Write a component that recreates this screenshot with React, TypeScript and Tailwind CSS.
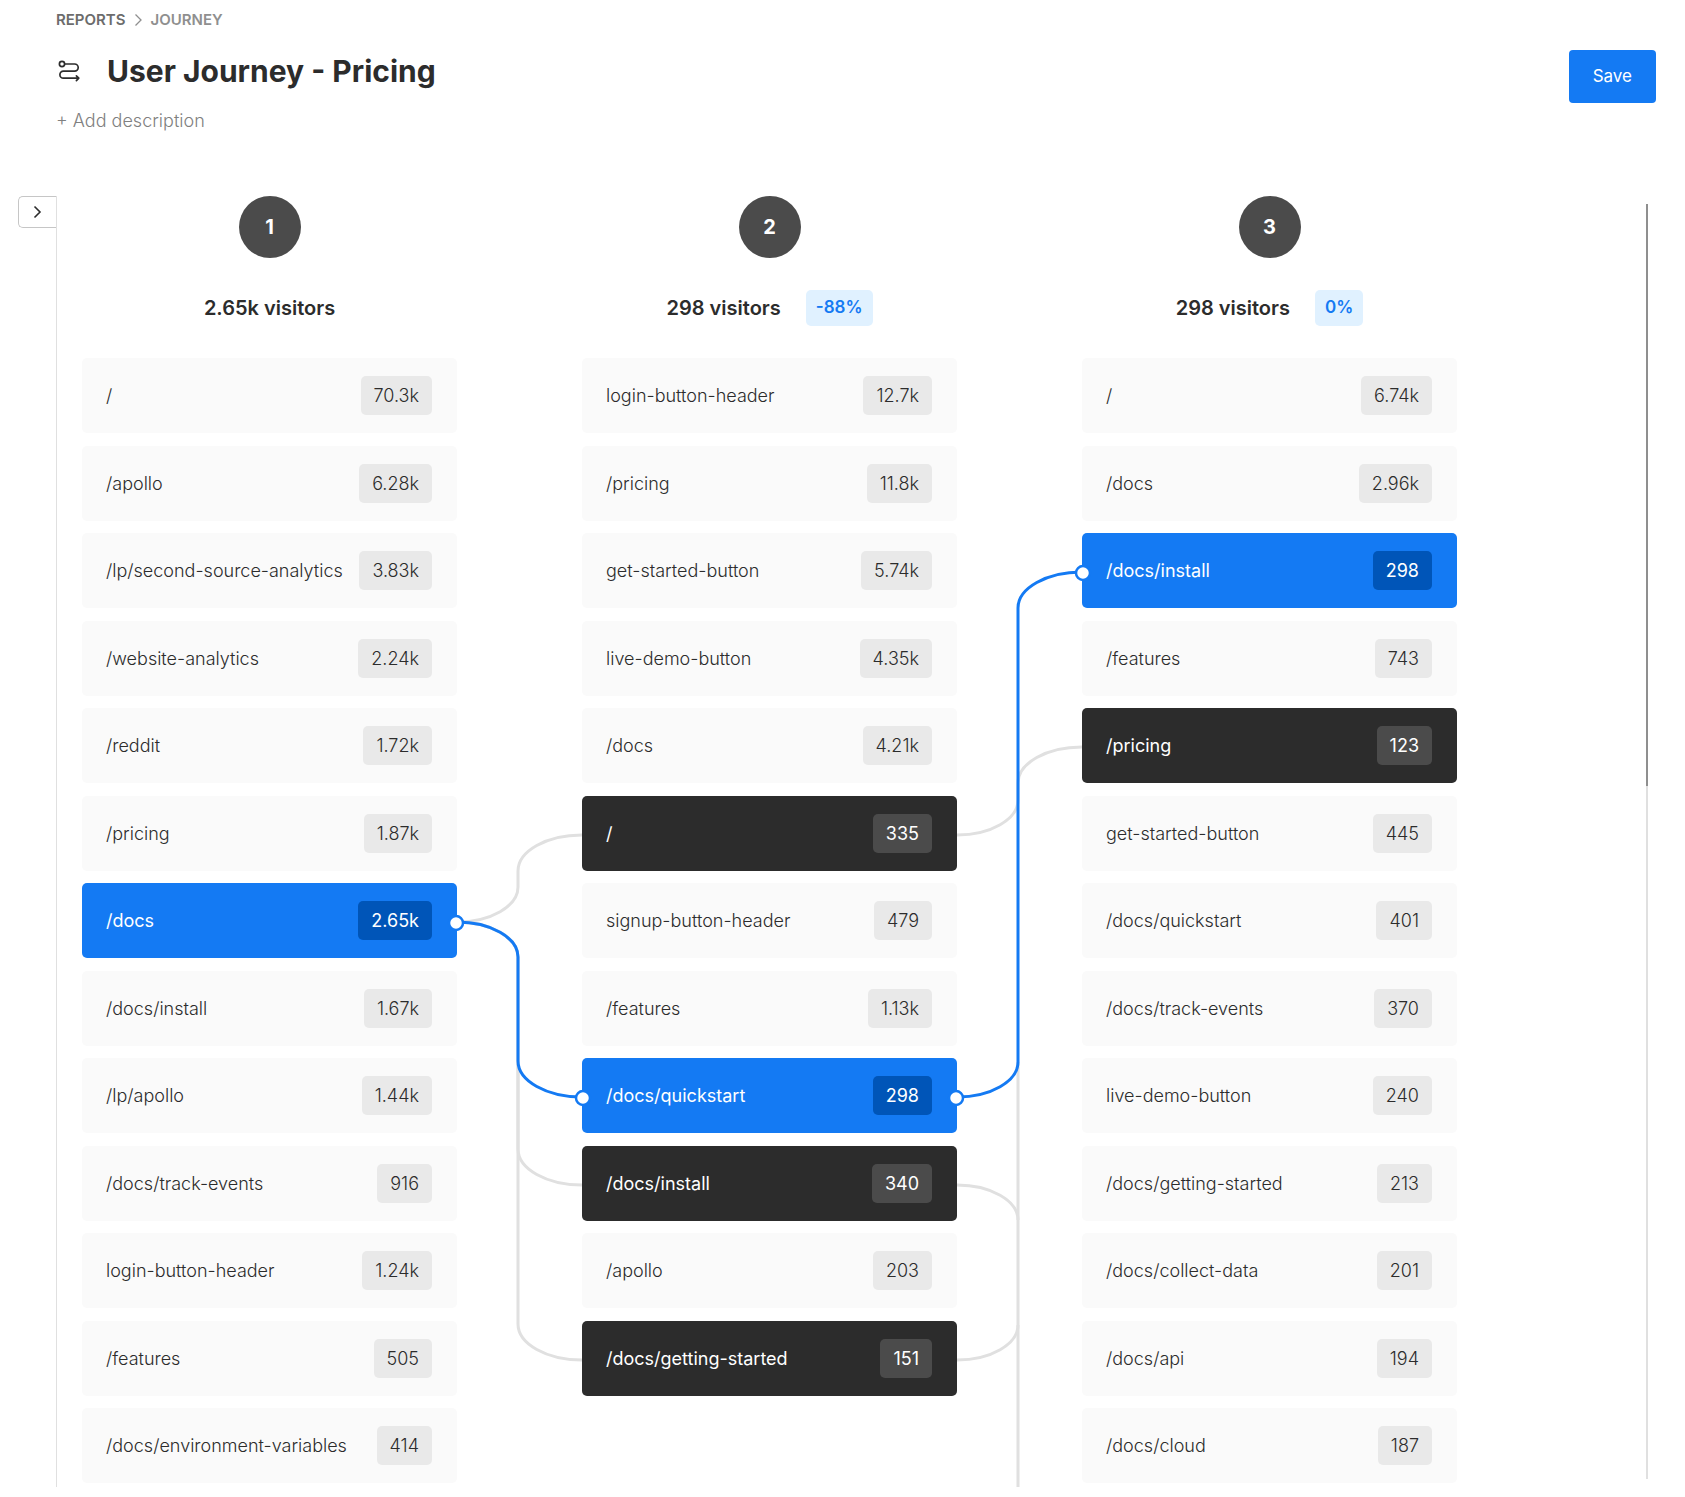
type Tone = 'plain' | 'active' | 'linked';
type Row = [label: string, count: string, tone?: Tone];
type Step = { visitors: string; change?: string; rows: Row[] };
type Link = { from: number; to: number; active?: boolean };

const steps: Step[] = [
  {
    visitors: '2.65k visitors',
    rows: [
      ['/', '70.3k'],
      ['/apollo', '6.28k'],
      ['/lp/second-source-analytics', '3.83k'],
      ['/website-analytics', '2.24k'],
      ['/reddit', '1.72k'],
      ['/pricing', '1.87k'],
      ['/docs', '2.65k', 'active'],
      ['/docs/install', '1.67k'],
      ['/lp/apollo', '1.44k'],
      ['/docs/track-events', '916'],
      ['login-button-header', '1.24k'],
      ['/features', '505'],
      ['/docs/environment-variables', '414'],
    ],
  },
  {
    visitors: '298 visitors',
    change: '-88%',
    rows: [
      ['login-button-header', '12.7k'],
      ['/pricing', '11.8k'],
      ['get-started-button', '5.74k'],
      ['live-demo-button', '4.35k'],
      ['/docs', '4.21k'],
      ['/', '335', 'linked'],
      ['signup-button-header', '479'],
      ['/features', '1.13k'],
      ['/docs/quickstart', '298', 'active'],
      ['/docs/install', '340', 'linked'],
      ['/apollo', '203'],
      ['/docs/getting-started', '151', 'linked'],
    ],
  },
  {
    visitors: '298 visitors',
    change: '0%',
    rows: [
      ['/', '6.74k'],
      ['/docs', '2.96k'],
      ['/docs/install', '298', 'active'],
      ['/features', '743'],
      ['/pricing', '123', 'linked'],
      ['get-started-button', '445'],
      ['/docs/quickstart', '401'],
      ['/docs/track-events', '370'],
      ['live-demo-button', '240'],
      ['/docs/getting-started', '213'],
      ['/docs/collect-data', '201'],
      ['/docs/api', '194'],
      ['/docs/cloud', '187'],
    ],
  },
];

const BOARD_HEIGHT = 1129;
const MID = 61;
const anchor = (row: number) => Math.round(row * 87.5) + 39;

function linkPath({ from, to }: Link) {
  const y1 = anchor(from);
  const y2 = anchor(to);
  return y2 > y1
    ? `M0 ${y1} A${MID} 35 0 0 1 ${MID} ${y1 + 35} V${y2 - 36} A64 36 0 0 0 125 ${y2}`
    : `M0 ${y1} A${MID} 35 0 0 0 ${MID} ${y1 - 35} V${y2 + 36} A64 36 0 0 1 125 ${y2}`;
}

const firstLinks: Link[] = [
  { from: 6, to: 5 },
  { from: 6, to: 9 },
  { from: 6, to: 11 },
  { from: 6, to: 8, active: true },
];

const secondLinks: Link[] = [
  { from: 5, to: 4 },
  { from: 8, to: 2, active: true },
];

// Links of the second step that leave the visible rows: a shared trunk with two branches.
const secondTrunk = [
  `M${MID} ${anchor(8) - 35} V${BOARD_HEIGHT}`,
  `M0 ${anchor(9)} A${MID} 35 0 0 1 ${MID} ${anchor(9) + 35}`,
  `M0 ${anchor(11)} A${MID} 35 0 0 0 ${MID} ${anchor(11) - 35}`,
];

function Connectors({ items, trunk = [] }: { items: Link[]; trunk?: string[] }) {
  return (
    <svg
      width="125"
      height={BOARD_HEIGHT}
      viewBox={`0 0 125 ${BOARD_HEIGHT}`}
      className="relative z-10 mt-[162px] shrink-0 overflow-visible"
      fill="none"
      aria-hidden="true"
    >
      {trunk.map((d) => (
        <path key={d} d={d} stroke="#e0e0e0" strokeWidth="3" />
      ))}
      {items.map((l) => (
        <path key={`${l.from}-${l.to}`} d={linkPath(l)} stroke={l.active ? '#147af3' : '#e0e0e0'} strokeWidth="3" />
      ))}
      {items
        .filter((l) => l.active)
        .map((l) => (
          <g key={l.from} fill="#fff" stroke="#147af3" strokeWidth="2.5">
            <circle cx="-1" cy={anchor(l.from) + 1} r="7" />
            <circle cx="126" cy={anchor(l.to) + 1} r="7" />
          </g>
        ))}
    </svg>
  );
}

const cardTone: Record<Tone, string> = {
  plain: 'bg-[#fafafa] text-[#2c2c2c] font-light',
  active: 'bg-[#147af3] text-white font-normal',
  linked: 'bg-[#2c2c2c] text-white font-normal',
};
const countTone: Record<Tone, string> = {
  plain: 'bg-[#e9e9e9]',
  active: 'bg-[#0055b8]',
  linked: 'bg-[#4b4b4b]',
};

function Card({ row: [label, count, tone = 'plain'] }: { row: Row }) {
  return (
    <li className="not-last:odd:mb-[13px] not-last:even:mb-3">
      <button
        type="button"
        className={`flex h-[75px] w-full items-center justify-between rounded-[5px] pr-[25px] pl-6 text-left text-[18px] leading-6 ${cardTone[tone]}`}
      >
        <span className="whitespace-nowrap">{label}</span>
        <span className={`flex h-[39px] items-center rounded-[5px] px-[13px] ${countTone[tone]}`}>{count}</span>
      </button>
    </li>
  );
}

function Column({ step, index }: { step: Step; index: number }) {
  return (
    <section className="w-[375px] shrink-0">
      <header className="flex flex-col items-center">
        <div className="flex size-[62px] items-center justify-center rounded-full bg-[#4b4b4b] text-xl font-bold text-white">
          {index + 1}
        </div>
        <div className="mt-8 mb-8 flex h-9 items-center gap-[25px]">
          <h2 className="text-xl font-semibold text-[#2c2c2c]">{step.visitors}</h2>
          {step.change && (
            <span className="flex h-9 items-center rounded-[5px] bg-[#e0f1ff] px-[10px] text-[17px] font-semibold text-[#147af3]">
              {step.change}
            </span>
          )}
        </div>
      </header>
      <ul>
        {step.rows.map((row) => (
          <Card key={row[0]} row={row} />
        ))}
      </ul>
    </section>
  );
}

export default function App() {
  return (
    <div className="bg-white pb-[10px] font-['Inter',sans-serif] text-[#2c2c2c]">
      <header className="pr-[29px] pl-[56px]">
        <nav aria-label="Breadcrumb" className="flex h-10 items-center gap-2 text-[15px] font-semibold">
          <a href="#reports" className="text-[#6c6c6c]">
            REPORTS
          </a>
          <svg width="9" height="14" viewBox="0 0 9 14" fill="none" stroke="#8f8f8f" strokeWidth="1.3" aria-hidden="true">
            <path d="M1.5 1.5L7 7l-5.5 5.5" />
          </svg>
          <span className="text-[#8f8f8f]">JOURNEY</span>
        </nav>
        <div className="flex items-start justify-between pt-[10px]">
          <div>
            <div className="flex h-[42px] items-center">
              <svg
                width="26"
                height="26"
                viewBox="0 0 26 26"
                fill="none"
                stroke="#2c2c2c"
                strokeWidth="1.7"
                strokeLinecap="round"
                strokeLinejoin="round"
                className="mr-[25px]"
                aria-hidden="true"
              >
                <circle cx="6" cy="6" r="2.6" />
                <path d="M8.8 6H18.6a3.6 3.6 0 0 1 0 7.2H7.4a3.5 3.5 0 0 0 0 7H22.6M20.4 17.8l2.4 2.4-2.4 2.4" />
              </svg>
              <h1 className="text-[30px] leading-[42px] font-bold">User Journey - Pricing</h1>
            </div>
            <button type="button" className="mt-[17px] text-[18px] leading-6 font-light text-[#808080]">
              + Add description
            </button>
          </div>
          <button type="button" className="h-[53px] rounded bg-[#147af3] px-6 text-[17px] text-white">
            Save
          </button>
        </div>
      </header>

      <main className="mt-[63px] flex items-start pr-[37px] pl-[18px]">
        <button
          type="button"
          aria-label="Open filters"
          className="flex h-8 w-[38px] shrink-0 items-center justify-center rounded-l-[5px] border border-r-0 border-[#c6c6c6]"
        >
          <svg width="9" height="14" viewBox="0 0 9 14" fill="none" stroke="#2c2c2c" strokeWidth="1.6" aria-hidden="true">
            <path d="M1.5 1.5L7 7l-5.5 5.5" />
          </svg>
        </button>
        <div className="flex min-w-0 flex-1 border-l border-[#e0e0e0] pl-[25px]">
          <Column step={steps[0]} index={0} />
          <Connectors items={firstLinks} />
          <Column step={steps[1]} index={1} />
          <Connectors items={secondLinks} trunk={secondTrunk} />
          <Column step={steps[2]} index={2} />
        </div>
        <div className="mt-2 mb-2 w-[2px] shrink-0 self-stretch bg-[#e0e0e0]">
          <div className="h-[582px] bg-[#8f8f8f]" />
        </div>
      </main>
    </div>
  );
}
